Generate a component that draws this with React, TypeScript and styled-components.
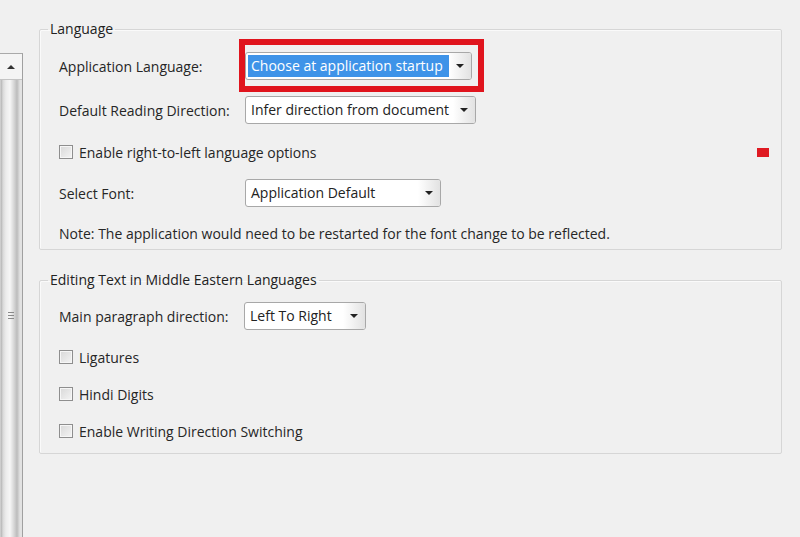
import React from 'react';
import styled, { createGlobalStyle } from 'styled-components';

const GlobalStyle = createGlobalStyle`
  html, body {
    margin: 0;
    padding: 0;
    background: #f0f0f0;
    overflow: hidden;
  }
  body {
    font-family: 'Open Sans', 'Noto Sans', sans-serif;
    font-size: 14px;
    color: #262626;
  }
`;

const Page = styled.div`
  display: flex;
  height: 537px;
`;

const ScrollPane = styled.div`
  margin-top: 53px;
  width: 22px;
  border-top: 1px solid #a9a9a9;
  border-right: 1px solid #a0a0a0;
  display: flex;
  flex-direction: column;
  overflow: hidden;
`;

const ArrowButton = styled.div`
  height: 25px;
  flex: none;
  display: flex;
  align-items: center;
  justify-content: center;
  background: #f4f4f4;
  border-bottom: 1px solid #c4c4c4;
`;

const Thumb = styled.div`
  flex: none;
  height: 470px;
  display: flex;
  align-items: center;
  justify-content: center;
  background: linear-gradient(
    to right,
    #e6e6e6 0px,
    #b4b4b4 1px,
    #d9d9d9 3px,
    #ececec 6px,
    #f6f6f6 10px,
    #d6d6d6 14px,
    #bcbcbc 17px,
    #e2e2e2 20px
  );
`;

const Grip = styled.div`
  display: flex;
  flex-direction: column;
  gap: 2px;
  span {
    display: block;
    width: 6px;
    height: 1px;
    background: #8a8a8a;
  }
`;

const Content = styled.div`
  flex: 1;
  padding: 20px 18px 0 16px;
  display: flex;
  flex-direction: column;
`;

const Group = styled.fieldset<{ $top: number }>`
  margin: ${(p) => p.$top}px 0 0 0;
  padding: 0;
  border: 1px solid #d6d6d6;
  box-shadow: inset 1px 1px 0 #fafafa;
  border-radius: 2px;
  min-width: 0;
`;

const Legend = styled.legend`
  margin-left: 8px;
  padding: 0 2px;
  line-height: 18px;
  color: #222;
`;

const GroupBody = styled.div<{ $pad: string }>`
  display: flex;
  flex-direction: column;
  padding: ${(p) => p.$pad};
`;

const Row = styled.div<{ $mt?: number }>`
  display: flex;
  align-items: center;
  height: 28px;
  margin-top: ${(p) => p.$mt ?? 0}px;
`;

const Label = styled.span<{ $w?: number }>`
  width: ${(p) => p.$w ?? 186}px;
  flex: none;
`;

const Select = styled.div<{ $w: number }>`
  position: relative;
  width: ${(p) => p.$w}px;
  height: 28px;
  box-sizing: border-box;
  border: 1px solid #a8a8a8;
  border-radius: 3px;
  background: #fff;
  display: flex;
  align-items: center;
  padding-left: 2px;
`;

const SelectText = styled.span<{ $selected?: boolean }>`
  flex: 1;
  padding: 1px 3px 2px 3px;
  white-space: nowrap;
  overflow: hidden;
  background: ${(p) => (p.$selected ? '#3e93e8' : 'transparent')};
  color: ${(p) => (p.$selected ? '#fff' : '#222')};
`;

const ArrowBox = styled.span`
  width: 22px;
  flex: none;
  align-self: stretch;
  display: flex;
  align-items: center;
  justify-content: center;
  background: linear-gradient(to right, #ffffff, #e2e2e2);
  border-radius: 0 2px 2px 0;
`;

const Caret = styled.span<{ $up?: boolean }>`
  width: 0;
  height: 0;
  border-left: 4px solid transparent;
  border-right: 4px solid transparent;
  ${(p) =>
    p.$up
      ? 'border-bottom: 4px solid #333;'
      : 'border-top: 4px solid #222;'}
`;

const Highlight = styled.div`
  position: absolute;
  left: -7px;
  top: -14px;
  right: -13px;
  bottom: -13px;
  border: 6px solid #e0141d;
  pointer-events: none;
`;

const CheckRow = styled(Row)`
  justify-content: space-between;
`;

const CheckLabel = styled.label`
  display: flex;
  align-items: center;
  gap: 6px;
`;

const Box = styled.span`
  width: 14px;
  height: 14px;
  box-sizing: border-box;
  border: 1px solid #8e8e8e;
  background: linear-gradient(135deg, #d8d8d8, #f4f4f4);
  box-shadow: inset 0 0 0 1px #f6f6f6;
`;

const Marker = styled.span`
  width: 12px;
  height: 9px;
  background: #df1a22;
  margin-right: 6px;
`;

const Dropdown = ({
  width,
  value,
  selected,
  children,
}: {
  width: number;
  value: string;
  selected?: boolean;
  children?: React.ReactNode;
}) => (
  <Select $w={width}>
    <SelectText $selected={selected}>{value}</SelectText>
    <ArrowBox>
      <Caret />
    </ArrowBox>
    {children}
  </Select>
);

const Check = ({ text }: { text: string }) => (
  <CheckLabel>
    <Box />
    {text}
  </CheckLabel>
);

const App: React.FC = () => {
  return (
    <>
      <GlobalStyle />
      <Page>
        <ScrollPane>
          <ArrowButton>
            <Caret $up />
          </ArrowButton>
          <Thumb>
            <Grip>
              <span />
              <span />
              <span />
            </Grip>
          </Thumb>
        </ScrollPane>
        <Content>
          <Group $top={0}>
            <Legend>Language</Legend>
            <GroupBody $pad="14px 6px 2px 19px">
              <Row>
                <Label>Application Language:</Label>
                <Dropdown width={227} value="Choose at application startup" selected>
                  <Highlight />
                </Dropdown>
              </Row>
              <Row $mt={16}>
                <Label>Default Reading Direction:</Label>
                <Dropdown width={231} value="Infer direction from document" />
              </Row>
              <CheckRow $mt={14}>
                <Check text="Enable right-to-left language options" />
                <Marker />
              </CheckRow>
              <Row $mt={13}>
                <Label>Select Font:</Label>
                <Dropdown width={196} value="Application Default" />
              </Row>
              <Row $mt={12}>
                Note: The application would need to be restarted for the font change to be reflected.
              </Row>
            </GroupBody>
          </Group>
          <Group $top={21}>
            <Legend>Editing Text in Middle Eastern Languages</Legend>
            <GroupBody $pad="13px 6px 8px 19px">
              <Row>
                <Label $w={185}>Main paragraph direction:</Label>
                <Dropdown width={122} value="Left To Right" />
              </Row>
              <Row $mt={13}>
                <Check text="Ligatures" />
              </Row>
              <Row $mt={9}>
                <Check text="Hindi Digits" />
              </Row>
              <Row $mt={9}>
                <Check text="Enable Writing Direction Switching" />
              </Row>
            </GroupBody>
          </Group>
        </Content>
      </Page>
    </>
  );
};

export default App;
